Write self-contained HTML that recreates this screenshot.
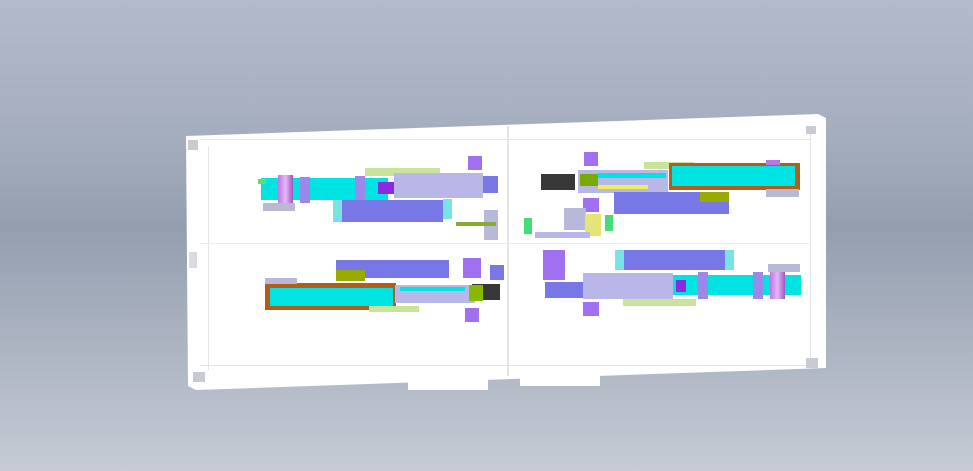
<!DOCTYPE html>
<html><head><style>
html,body{margin:0;padding:0}
body{width:973px;height:471px;overflow:hidden;position:relative;background:linear-gradient(180deg,#b3bacb 0%,#a4adbd 30%,#939eaf 48%,#a9b1bf 70%,#c6cbd5 100%)}
div{position:absolute}
.l{background:#e2e4e8}
</style></head><body>
<!-- white frame -->
<div style="left:186px;top:114px;width:642px;height:278px;background:#fff;clip-path:polygon(0px 22px,632px 0px,640px 4px,640px 254px,10px 276px,2px 272px)"></div>
<div style="left:408px;top:372px;width:80px;height:18px;background:#fff"></div>
<div style="left:520px;top:368px;width:80px;height:18px;background:#fff"></div>
<div class="l" style="left:208px;top:146px;width:1px;height:224px"></div>
<div class="l" style="left:507px;top:126px;width:2px;height:250px"></div>
<div class="l" style="left:810px;top:128px;width:1px;height:236px"></div>
<div class="l" style="left:200px;top:243px;width:610px;height:1px;background:#eee"></div>
<div class="l" style="left:200px;top:139px;width:610px;height:1px"></div>
<div class="l" style="left:200px;top:365px;width:610px;height:1px"></div>
<div style="left:188px;top:140px;width:10px;height:10px;background:#c8ccd2"></div>
<div style="left:806px;top:126px;width:10px;height:8px;background:#c8ccd2"></div>
<div style="left:193px;top:372px;width:12px;height:10px;background:#c8ccd2"></div>
<div style="left:806px;top:358px;width:12px;height:10px;background:#c8ccd2"></div>
<div style="left:189px;top:252px;width:8px;height:16px;background:#d8dbe0"></div>
<!-- left top -->
<div style="left:365px;top:168px;width:75px;height:8px;background:#c9e49a"></div>
<div style="left:261px;top:178px;width:127px;height:22px;background:#00e3e3"></div>
<div style="left:258px;top:179px;width:8px;height:5px;background:#66dd66"></div>
<div style="left:300px;top:177px;width:10px;height:26px;background:#9b88e8"></div>
<div style="left:355px;top:176px;width:10px;height:26px;background:#9b88e8"></div>
<div style="left:378px;top:182px;width:16px;height:12px;background:#8a2be2"></div>
<div style="left:278px;top:175px;width:15px;height:28px;background:linear-gradient(90deg,#b877e0,#e6b8f5,#9d55c5)"></div>
<div style="left:263px;top:203px;width:32px;height:8px;background:#b9b9d6"></div>
<div style="left:394px;top:173px;width:89px;height:25px;background:#b9b6e8"></div>
<div style="left:483px;top:176px;width:15px;height:17px;background:#7777e6"></div>
<div style="left:333px;top:200px;width:12px;height:22px;background:#77e4e4"></div>
<div style="left:342px;top:200px;width:101px;height:22px;background:#7777e6"></div>
<div style="left:443px;top:199px;width:9px;height:20px;background:#77e4e4"></div>
<div style="left:468px;top:156px;width:14px;height:14px;background:#a070f0"></div>
<div style="left:484px;top:210px;width:14px;height:30px;background:#b8b8d8"></div>
<div style="left:456px;top:222px;width:40px;height:4px;background:#88aa33"></div>
<!-- left bottom -->
<div style="left:336px;top:260px;width:113px;height:18px;background:#7777e6"></div>
<div style="left:336px;top:270px;width:29px;height:11px;background:#99aa00"></div>
<div style="left:265px;top:283px;width:131px;height:27px;background:#b05e1a"></div>
<div style="left:270px;top:288px;width:123px;height:18px;background:#00e3e3"></div>
<div style="left:265px;top:278px;width:32px;height:6px;background:#b9b9d6"></div>
<div style="left:395px;top:285px;width:80px;height:18px;background:#b9b6e8"></div>
<div style="left:400px;top:287px;width:65px;height:4px;background:#00e3e3"></div>
<div style="left:472px;top:284px;width:28px;height:16px;background:#373737"></div>
<div style="left:469px;top:285px;width:14px;height:16px;background:#88b800"></div>
<div style="left:369px;top:306px;width:50px;height:6px;background:#c9e49a"></div>
<div style="left:465px;top:308px;width:14px;height:14px;background:#a070f0"></div>
<div style="left:463px;top:258px;width:18px;height:20px;background:#a070f0"></div>
<div style="left:490px;top:265px;width:14px;height:15px;background:#7777e6"></div>
<!-- right top -->
<div style="left:584px;top:152px;width:14px;height:14px;background:#a070f0"></div>
<div style="left:644px;top:162px;width:50px;height:7px;background:#c9e49a"></div>
<div style="left:541px;top:174px;width:34px;height:16px;background:#373737"></div>
<div style="left:578px;top:170px;width:90px;height:23px;background:#b9b6e8"></div>
<div style="left:580px;top:174px;width:18px;height:12px;background:#7aaa00"></div>
<div style="left:598px;top:173px;width:68px;height:5px;background:#00e3e3"></div>
<div style="left:598px;top:185px;width:50px;height:4px;background:#eeee55"></div>
<div style="left:669px;top:163px;width:131px;height:27px;background:#b05e1a"></div>
<div style="left:672px;top:166px;width:123px;height:20px;background:#00e3e3"></div>
<div style="left:766px;top:160px;width:14px;height:5px;background:#b877e0"></div>
<div style="left:766px;top:189px;width:33px;height:8px;background:#b9b9d6"></div>
<div style="left:614px;top:192px;width:115px;height:22px;background:#7777e6"></div>
<div style="left:700px;top:192px;width:29px;height:10px;background:#99aa00"></div>
<div style="left:583px;top:198px;width:16px;height:14px;background:#a070f0"></div>
<div style="left:564px;top:208px;width:22px;height:22px;background:#b8b8d8"></div>
<div style="left:585px;top:214px;width:16px;height:22px;background:#e4e477"></div>
<div style="left:524px;top:218px;width:8px;height:16px;background:#44dd77"></div>
<div style="left:605px;top:215px;width:8px;height:16px;background:#44dd77"></div>
<div style="left:535px;top:232px;width:55px;height:6px;background:#b9b6e8"></div>
<!-- right bottom -->
<div style="left:543px;top:250px;width:22px;height:30px;background:#a070f0"></div>
<div style="left:615px;top:250px;width:118px;height:20px;background:#7777e6"></div>
<div style="left:615px;top:250px;width:9px;height:20px;background:#77e4e4"></div>
<div style="left:725px;top:250px;width:9px;height:20px;background:#77e4e4"></div>
<div style="left:545px;top:282px;width:38px;height:16px;background:#7777e6"></div>
<div style="left:583px;top:273px;width:90px;height:26px;background:#b9b6e8"></div>
<div style="left:673px;top:275px;width:128px;height:20px;background:#00e3e3"></div>
<div style="left:676px;top:280px;width:10px;height:12px;background:#8a2be2"></div>
<div style="left:698px;top:272px;width:10px;height:27px;background:#9b88e8"></div>
<div style="left:753px;top:272px;width:10px;height:27px;background:#9b88e8"></div>
<div style="left:770px;top:268px;width:15px;height:31px;background:linear-gradient(90deg,#b877e0,#e6b8f5,#9d55c5)"></div>
<div style="left:768px;top:264px;width:32px;height:8px;background:#b9b9d6"></div>
<div style="left:623px;top:299px;width:73px;height:7px;background:#c9e49a"></div>
<div style="left:583px;top:302px;width:16px;height:14px;background:#a070f0"></div>
</body></html>
